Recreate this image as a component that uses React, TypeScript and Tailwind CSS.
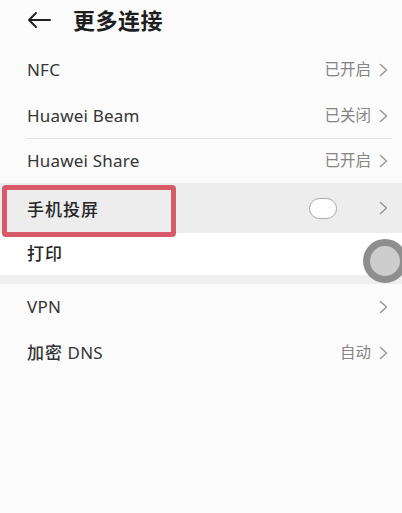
import React from "react";

const font = { fontFamily: '"Noto Sans", "Noto Sans CJK SC", sans-serif' };

function Chevron({ className = "" }: { className?: string }) {
  return (
    <svg width="9" height="14" viewBox="0 0 9 14" className={className}>
      <path d="M1.5 1.5 L7.5 7 L1.5 12.5" fill="none" stroke="#9a9a9a" strokeWidth="1.6" strokeLinecap="round" strokeLinejoin="round" />
    </svg>
  );
}

function Row({ label, value, h, bold = false, divider = false }: { label: React.ReactNode; value?: string; h: string; bold?: boolean; divider?: boolean }) {
  return (
    <div className={`flex items-center justify-between pl-[27px] pr-[14px] ${h} ${divider ? "relative" : ""}`}>
      <span className={`text-[17px] text-[#353535] tracking-[0.2px] ${bold ? "font-medium" : ""}`}>{label}</span>
      <div className="flex items-center gap-[8px]">
        {value && <span className="text-[15.5px] text-[#858585]">{value}</span>}
        <Chevron />
      </div>
      {divider && <div className="absolute bottom-0 left-[27px] right-[10px] h-px bg-[#e2e2e2]" />}
    </div>
  );
}

export default function App() {
  return (
    <div className="relative w-[402px] h-[513px] overflow-hidden bg-[#fbfbfb]" style={font}>
      {/* header */}
      <div className="flex items-center h-[44px] pl-[27px] pt-[0px] pb-[4px]">
        <svg width="24" height="18" viewBox="0 0 24 18">
          <path d="M23 9 H2 M9 2 L2 9 L9 16" fill="none" stroke="#222" strokeWidth="2" strokeLinecap="round" strokeLinejoin="round" />
        </svg>
        <span className="ml-[22px] text-[22px] font-bold text-[#1e1e1e] tracking-[0.5px]">更多连接</span>
      </div>
      <div className="h-[3px]" />
      <Row label="NFC" value="已开启" h="h-[46px]" />
      <Row label="Huawei Beam" value="已关闭" h="h-[46px]" divider />
      <Row label="Huawei Share" value="已开启" h="h-[44px]" />

      {/* highlighted row */}
      <div className="relative flex items-center justify-between h-[50px] bg-[#ededed] pl-[27px] pr-[14px]">
        <span className="text-[17px] font-medium text-[#262626] tracking-[1px] pt-[3px]">手机投屏</span>
        <div className="flex items-center gap-[42px]">
          <div className="w-[28px] h-[21px] rounded-full border border-[#a8a8a8] bg-white" />
          <Chevron />
        </div>
        <div className="absolute left-[2px] top-[2px] w-[174px] h-[52px] rounded-[4px] border-[5px] border-[#d85a68]" />
      </div>

      {/* 打印 */}
      <div className="flex items-center h-[42px] pl-[27px] bg-white">
        <span className="text-[17px] font-medium text-[#262626] tracking-[1px]">打印</span>
      </div>
      <div className="h-[9px] bg-[#efefef]" />

      <Row label="VPN" h="h-[46px]" />
      <Row label={<><span className="font-medium tracking-[1px]">加密</span> DNS</>} value="自动" h="h-[45px]" />

      {/* touch indicator overlay */}
      <div className="absolute left-[363px] top-[239px] w-[44px] h-[44px] rounded-full border-[7px] border-[#8e8e8e] bg-[#cdcdcd] blur-[0.5px]" />
    </div>
  );
}
